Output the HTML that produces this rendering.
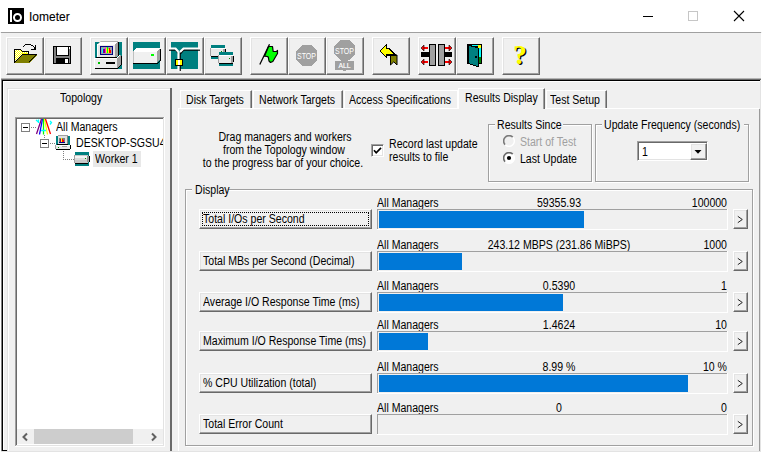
<!DOCTYPE html>
<html><head><meta charset="utf-8">
<style>
html,body{margin:0;padding:0;}
body{width:762px;height:452px;overflow:hidden;background:#f0f0f0;position:relative;}
.a{position:absolute;}
.t{position:absolute;font-family:"Liberation Sans",sans-serif;font-size:12px;line-height:14px;white-space:nowrap;color:#000;transform:scaleX(0.88);transform-origin:0 0;}
.tc{text-align:center;transform-origin:50% 0;}
.tr{text-align:right;transform-origin:100% 0;}
.btn{position:absolute;box-sizing:border-box;border-top:1px solid #fff;border-left:1px solid #fff;border-right:1px solid #696969;border-bottom:1px solid #696969;box-shadow:inset -1px -1px 0 #a0a0a0, inset 1px 1px 0 #e3e3e3;}
.sunk{position:absolute;box-sizing:border-box;border-top:1px solid #a0a0a0;border-left:1px solid #a0a0a0;border-right:1px solid #fff;border-bottom:1px solid #fff;box-shadow:inset 1px 1px 0 #696969, inset -1px -1px 0 #e3e3e3;}
.grp{position:absolute;box-sizing:border-box;border:1px solid #a0a0a0;box-shadow:1px 1px 0 #fff, inset 1px 1px 0 #fff;}
svg{position:absolute;left:0;top:0;}
</style></head><body>

<div class="a" style="left:0px;top:0px;width:762px;height:32px;background:#fff;"></div>
<div class="a" style="left:1px;top:32px;width:760px;height:1px;background:#a0a0a0;"></div>
<div class="a" style="left:0px;top:33px;width:1px;height:419px;background:#fff;"></div>
<div class="a" style="left:761px;top:33px;width:1px;height:419px;background:#fff;"></div>
<div class="a" style="left:8px;top:8px;width:16px;height:16px;background:#000;"></div>
<div class="a" style="left:10px;top:10px;width:2px;height:12px;background:#fff;"></div>
<div class="a" style="left:13px;top:13px;width:9px;height:9px;box-sizing:border-box;border:2px solid #fff;border-radius:50%;"></div>
<div class="a" style="left:29px;top:10px;font-family:'Liberation Sans',sans-serif;font-size:12px;line-height:14px;white-space:nowrap;color:#000;-webkit-text-stroke:0.1px #000">Iometer</div>
<div class="a" style="left:643px;top:16px;width:10px;height:1px;background:#000;"></div>
<div class="a" style="left:688px;top:11px;width:8px;height:8px;border:1px solid #c6c6c6;"></div>
<svg style="left:733px;top:10px" width="12" height="12"><path d="M1 1L11 11M11 1L1 11" stroke="#000" stroke-width="1.1"/></svg>
<div class="btn" style="left:6px;top:37px;width:38px;height:38px;background:#f0f0f0"></div>
<div class="btn" style="left:44px;top:37px;width:38px;height:38px;background:#f0f0f0"></div>
<div class="btn" style="left:90px;top:37px;width:38px;height:38px;background:#f0f0f0"></div>
<div class="btn" style="left:128px;top:37px;width:38px;height:38px;background:#f0f0f0"></div>
<div class="btn" style="left:166px;top:37px;width:38px;height:38px;background:#f0f0f0"></div>
<div class="btn" style="left:204px;top:37px;width:38px;height:38px;background:#f0f0f0"></div>
<div class="btn" style="left:250px;top:37px;width:38px;height:38px;background:#f0f0f0"></div>
<div class="btn" style="left:288px;top:37px;width:38px;height:38px;background:#f0f0f0"></div>
<div class="btn" style="left:326px;top:37px;width:38px;height:38px;background:#f0f0f0"></div>
<div class="btn" style="left:372px;top:37px;width:38px;height:38px;background:#f0f0f0"></div>
<div class="btn" style="left:418px;top:37px;width:38px;height:38px;background:#f0f0f0"></div>
<div class="btn" style="left:456px;top:37px;width:38px;height:38px;background:#f0f0f0"></div>
<div class="btn" style="left:502px;top:37px;width:38px;height:38px;background:#f0f0f0"></div>
<svg width="762" height="80" shape-rendering="crispEdges"><path d="M14 49H21V50H22V51H29V54H22L15 62V49Z" fill="#ffff00"/><path d="M15 50h1v1h-1zM17 50h1v1h-1zM19 50h1v1h-1zM16 51h1v1h-1zM18 51h1v1h-1zM20 51h1v1h-1zM15 52h1v1h-1zM17 52h1v1h-1zM19 52h1v1h-1zM21 52h1v1h-1zM23 52h1v1h-1zM25 52h1v1h-1zM27 52h1v1h-1zM16 53h1v1h-1zM18 53h1v1h-1zM20 53h1v1h-1zM15 54h1v1h-1zM17 54h1v1h-1zM19 54h1v1h-1zM16 55h1v1h-1zM18 55h1v1h-1zM15 56h1v1h-1zM17 56h1v1h-1zM16 57h1v1h-1zM15 58h1v1h-1z" fill="#fff"/><rect x="14" y="49" width="7" height="1" fill="#000"/><rect x="21" y="50" width="1" height="1" fill="#000"/><rect x="22" y="51" width="7" height="1" fill="#000"/><rect x="28" y="51" width="1" height="3" fill="#000"/><rect x="14" y="49" width="1" height="14" fill="#000"/><rect x="14" y="62" width="16" height="1" fill="#000"/><path d="M22 54H37V55.5L30 62.5H15.5Z" fill="#808000"/><path d="M22.5 54.5H36.5L29 62M22.5 54.5L15 62" stroke="#000" stroke-width="1" fill="none"/><path d="M21.5 54.5L14.5 61.5" stroke="#fff" stroke-width="1" fill="none" opacity="0.8"/><rect x="23" y="46" width="1" height="1" fill="#000"/><rect x="24" y="45" width="1" height="1" fill="#000"/><rect x="25" y="44" width="6" height="1" fill="#000"/><rect x="31" y="45" width="2" height="1" fill="#000"/><rect x="33" y="46" width="1" height="1" fill="#000"/><rect x="34" y="47" width="1" height="2" fill="#000"/><rect x="35" y="45" width="1" height="5" fill="#000"/><rect x="31" y="49" width="5" height="1" fill="#000"/><rect x="53" y="46" width="18" height="18" fill="#000"/><rect x="54" y="47" width="16" height="16" fill="#808080"/><rect x="56" y="46" width="13" height="10" fill="#000"/><rect x="57" y="47" width="11" height="8" fill="#fff"/><rect x="69" y="47" width="1" height="2" fill="#fff"/><rect x="56" y="58" width="13" height="5" fill="#000"/><rect x="65" y="59" width="3" height="4" fill="#fff"/><rect x="95" y="42" width="27" height="27" fill="#008080"/><path d="M97 44L100 41H118L115 44Z" fill="#fff"/><path d="M97.5 44.5L100.5 41.5H118" stroke="#b0b0b0" stroke-width="1" fill="none" shape-rendering="auto"/><rect x="97" y="44" width="18" height="14" fill="#e8e8e8"/><rect x="97" y="44" width="18" height="1" fill="#fff"/><rect x="97" y="44" width="1" height="14" fill="#fff"/><path d="M115 44L118 41V55L115 58Z" fill="#a0a0a0"/><rect x="118" y="42" width="1" height="14" fill="#000"/><rect x="100" y="46" width="13" height="9" fill="#000080"/><rect x="101" y="47" width="11" height="7" fill="#a0a0a0"/><rect x="102" y="48" width="1" height="5" fill="#00ffff"/><rect x="103" y="49" width="2" height="4" fill="#800080"/><rect x="105" y="48" width="1" height="5" fill="#ff00ff"/><rect x="106" y="48" width="1" height="5" fill="#ffff00"/><rect x="107" y="47" width="1" height="6" fill="#00ff00"/><rect x="108" y="49" width="1" height="4" fill="#ffff00"/><rect x="109" y="48" width="1" height="5" fill="#ff0000"/><rect x="110" y="50" width="1" height="3" fill="#ff0000"/><rect x="96" y="57" width="23" height="1" fill="#000"/><rect x="94" y="58" width="23" height="10" fill="#ececec"/><rect x="94" y="58" width="23" height="1" fill="#fff"/><rect x="94" y="58" width="1" height="10" fill="#fff"/><path d="M117 58L121 55V64L117 68Z" fill="#a0a0a0"/><path d="M116 58L120 55H121L117 58Z" fill="#fff"/><rect x="121" y="56" width="1" height="9" fill="#000"/><rect x="95" y="68" width="23" height="1" fill="#000"/><path d="M117.5 68.5L121.5 64.5" stroke="#000" stroke-width="1.2"/><rect x="98" y="62" width="2" height="2" fill="#00c000"/><rect x="106" y="62" width="9" height="2" fill="#000"/><rect x="133" y="42" width="27" height="27" fill="#008080"/><path d="M136 48H160L157 51H133Z" fill="#fff"/><rect x="133" y="51" width="24" height="12" fill="#f0f0f0"/><rect x="133" y="51" width="24" height="1" fill="#fff"/><rect x="133" y="51" width="1" height="12" fill="#c0c0c0"/><path d="M157 51L160 48V59L157 62Z" fill="#a0a0a0"/><rect x="160" y="49" width="1" height="11" fill="#000"/><rect x="133" y="63" width="24" height="1" fill="#000"/><path d="M157 63L161 59V60L157.5 64Z" fill="#000"/><rect x="151" y="54" width="3" height="2" fill="#00ff00"/><rect x="171" y="42" width="27" height="27" fill="#008080"/><path d="M169 50H176L178.5 53.5M200 50H183.5L180.5 53.5M180 53V71" stroke="#000" stroke-width="1.6" fill="none" shape-rendering="auto"/><path d="M169 48.5H175.5L178.5 52M200 48.5H183.5L180 52M178.5 52V71" stroke="#fff" stroke-width="2.2" fill="none" shape-rendering="auto"/><rect x="175" y="59" width="8" height="7" fill="#000"/><rect x="176" y="60" width="6" height="5" fill="#ffff00"/><rect x="178" y="60" width="2" height="5" fill="#fff"/><rect x="211" y="45" width="14" height="14" fill="#008080"/><rect x="210" y="48" width="15" height="8" fill="#e8e8e8"/><rect x="210" y="48" width="15" height="1" fill="#fff"/><rect x="210" y="48" width="1" height="8" fill="#a0a0a0"/><rect x="223" y="49" width="2" height="7" fill="#a0a0a0"/><rect x="225" y="49" width="1" height="6" fill="#000"/><rect x="211" y="56" width="14" height="1" fill="#000"/><rect x="221" y="51" width="1" height="1" fill="#008000"/><rect x="219" y="52" width="14" height="14" fill="#008080"/><rect x="218" y="55" width="15" height="8" fill="#e8e8e8"/><rect x="218" y="55" width="15" height="1" fill="#fff"/><rect x="218" y="55" width="1" height="8" fill="#a0a0a0"/><rect x="231" y="56" width="2" height="7" fill="#a0a0a0"/><rect x="233" y="56" width="1" height="6" fill="#000"/><rect x="219" y="63" width="14" height="1" fill="#000"/><rect x="229" y="58" width="1" height="1" fill="#008000"/><path d="M264.5 56.2L268.5 46.5H272.5L273.2 51.5H276.5L277.5 50.5V53.5L272.8 61.5L270.5 62.5L269 61L268.3 57.2L267.5 56.5Z" fill="#00ff00" stroke="#000" stroke-width="1.2" stroke-linejoin="round" shape-rendering="auto"/><path d="M259.8 64.5L269.5 44.2" stroke="#000" stroke-width="1.25" shape-rendering="auto"/><path d="M302 45H311L317 51V60L311 66H302L296 60V51Z" fill="#a0a0a0"/><text x="306.5" y="58.8" font-family="Liberation Sans" font-size="9" fill="#fff" text-anchor="middle" textLength="19" shape-rendering="auto" lengthAdjust="spacingAndGlyphs">STOP</text><path d="M340 40H349L355 46V54L349 60H340L334 54V46Z" fill="#a0a0a0"/><rect x="341" y="59" width="7" height="2" fill="#a0a0a0"/><rect x="335" y="61" width="19" height="9" fill="#a0a0a0"/><rect x="343" y="70" width="3" height="1" fill="#a0a0a0"/><text x="344.5" y="54" font-family="Liberation Sans" font-size="9" fill="#fff" text-anchor="middle" textLength="19" shape-rendering="auto" lengthAdjust="spacingAndGlyphs">STOP</text><text x="344.5" y="68.2" font-family="Liberation Sans" font-size="8" fill="#fff" text-anchor="middle" textLength="12" shape-rendering="auto" stroke="#fff" stroke-width="0.2" lengthAdjust="spacingAndGlyphs">ALL</text><path d="M390.5 55H397V65L393.8 61.8L390.5 65Z" fill="#808000" stroke="#000" stroke-width="1" shape-rendering="auto"/><path d="M380 51L386.5 44.8V48.3H388.5L396 55H386.5V57.5Z" fill="#ffff00" stroke="#000" stroke-width="1.1" stroke-linejoin="miter"/><rect x="421" y="52" width="8" height="5" fill="#000"/><rect x="445" y="52" width="7" height="5" fill="#000"/><rect x="429" y="44" width="7" height="22" fill="#000"/><rect x="430" y="45" width="5" height="20" fill="#a0a0a0"/><rect x="438" y="44" width="7" height="22" fill="#000"/><rect x="439" y="45" width="5" height="20" fill="#a0a0a0"/><rect x="423" y="47" width="5" height="2" fill="#ff0000"/><rect x="445" y="47" width="5" height="2" fill="#ff0000"/><path d="M421 48L424 45V51Z" fill="#ff0000" stroke="#000" stroke-width="0.6" shape-rendering="auto"/><path d="M452 48L449 45V51Z" fill="#ff0000" stroke="#000" stroke-width="0.6" shape-rendering="auto"/><rect x="423" y="61" width="5" height="2" fill="#ff0000"/><rect x="445" y="61" width="5" height="2" fill="#ff0000"/><path d="M421 62L424 59V65Z" fill="#ff0000" stroke="#000" stroke-width="0.6" shape-rendering="auto"/><path d="M452 62L449 59V65Z" fill="#ff0000" stroke="#000" stroke-width="0.6" shape-rendering="auto"/><rect x="467" y="44" width="15" height="20" fill="#000"/><rect x="479" y="45" width="2" height="12" fill="#00ffff"/><rect x="472" y="45" width="7" height="1" fill="#00ffff"/><rect x="478" y="45" width="3" height="3" fill="#ffff00"/><rect x="479" y="57" width="2" height="6" fill="#008000"/><path d="M468 45L478 48V66.5L468 63.5Z" fill="#008080" stroke="#000" stroke-width="1"/><rect x="475" y="56" width="2" height="2" fill="#000"/><text x="521.3" y="65" font-family="Liberation Serif" font-size="27" font-weight="bold" fill="#000" text-anchor="middle" shape-rendering="auto">?</text><text x="520" y="64" font-family="Liberation Serif" font-size="27" font-weight="bold" fill="#ffff00" text-anchor="middle" shape-rendering="auto">?</text></svg>
<div class="a" style="left:1px;top:78px;width:760px;height:1px;background:#b4b4b4;"></div>
<div class="a" style="left:1px;top:79px;width:760px;height:1px;background:#696969;"></div>
<div class="a" style="left:1px;top:79px;width:1px;height:372px;background:#808080;"></div>
<div class="a" style="left:2px;top:80px;width:758px;height:1px;background:#000;"></div>
<div class="a" style="left:2px;top:80px;width:1px;height:371px;background:#000;"></div>
<div class="a" style="left:2px;top:450px;width:6px;height:1px;background:#000;"></div>
<div class="a" style="left:3px;top:81px;width:757px;height:1px;background:#fff;"></div>
<div class="a" style="left:3px;top:81px;width:1px;height:369px;background:#fff;"></div>
<div class="a" style="left:760px;top:80px;width:1px;height:372px;background:#e3e3e3;"></div>
<div class="a" style="left:1px;top:451px;width:760px;height:1px;background:#e3e3e3;"></div>
<div class="a" style="left:7px;top:88px;width:1px;height:363px;background:#e3e3e3;"></div>
<div class="a" style="left:7px;top:88px;width:164px;height:1px;background:#e3e3e3;"></div>
<div class="a" style="left:8px;top:89px;width:1px;height:362px;background:#fff;"></div>
<div class="a" style="left:8px;top:89px;width:162px;height:1px;background:#fff;"></div>
<div class="a" style="left:170px;top:88px;width:2px;height:363px;background:#696969;"></div>
<div class="t" style="left:60px;top:91px;color:#000;">Topology</div>
<div class="a" style="left:15px;top:117px;width:150px;height:330px;background:#fff;"></div>
<div class="a" style="left:15px;top:117px;width:149px;height:1px;background:#a0a0a0;"></div>
<div class="a" style="left:15px;top:117px;width:1px;height:330px;background:#a0a0a0;"></div>
<div class="a" style="left:16px;top:118px;width:147px;height:1px;background:#696969;"></div>
<div class="a" style="left:16px;top:118px;width:1px;height:328px;background:#696969;"></div>
<div class="a" style="left:163px;top:118px;width:1px;height:328px;background:#e3e3e3;"></div>
<div class="a" style="left:16px;top:445px;width:148px;height:1px;background:#e3e3e3;"></div>
<div class="a" style="left:164px;top:117px;width:1px;height:330px;background:#fff;"></div>
<div class="a" style="left:15px;top:446px;width:150px;height:1px;background:#fff;"></div>
<div class="a" style="left:17px;top:429px;width:146px;height:15px;background:#f0f0f0;"></div>
<div class="a" style="left:34px;top:429px;width:99px;height:15px;background:#cdcdcd;"></div>
<svg style="left:16px;top:429px" width="17" height="16"><path d="M11 4.5L7.5 8L11 11.5" stroke="#606060" stroke-width="2" fill="none"/></svg>
<svg style="left:146px;top:429px" width="17" height="16"><path d="M6 4.5L9.5 8L6 11.5" stroke="#606060" stroke-width="2" fill="none"/></svg>
<svg width="200" height="180" shape-rendering="crispEdges"><rect x="21" y="123" width="9" height="9" fill="#808080"/><rect x="22" y="124" width="7" height="7" fill="#fff"/><rect x="23" y="127" width="5" height="1" fill="#000"/><rect x="40" y="139" width="9" height="9" fill="#808080"/><rect x="41" y="140" width="7" height="7" fill="#fff"/><rect x="42" y="143" width="5" height="1" fill="#000"/><rect x="31" y="127" width="1" height="1" fill="#808080"/><rect x="33" y="127" width="1" height="1" fill="#808080"/><rect x="35" y="127" width="1" height="1" fill="#808080"/><rect x="44" y="135" width="1" height="1" fill="#808080"/><rect x="44" y="137" width="1" height="1" fill="#808080"/><rect x="50" y="143" width="1" height="1" fill="#808080"/><rect x="52" y="143" width="1" height="1" fill="#808080"/><rect x="54" y="143" width="1" height="1" fill="#808080"/><rect x="63" y="151" width="1" height="1" fill="#808080"/><rect x="63" y="153" width="1" height="1" fill="#808080"/><rect x="63" y="155" width="1" height="1" fill="#808080"/><rect x="63" y="157" width="1" height="1" fill="#808080"/><rect x="63" y="159" width="1" height="1" fill="#808080"/><rect x="63" y="159" width="1" height="1" fill="#808080"/><rect x="65" y="159" width="1" height="1" fill="#808080"/><rect x="67" y="159" width="1" height="1" fill="#808080"/><rect x="69" y="159" width="1" height="1" fill="#808080"/><rect x="71" y="159" width="1" height="1" fill="#808080"/><rect x="73" y="159" width="1" height="1" fill="#808080"/><g shape-rendering="auto" stroke-width="1.3" fill="none"><path d="M41.5 119L36.5 134" stroke="#800080"/><path d="M42.5 119L39.5 134.5" stroke="#0000ff"/><path d="M43.5 119V134.5" stroke="#00ff00"/><path d="M44.5 119L47.5 134.5" stroke="#ffff00"/><path d="M45.5 119L50.5 134" stroke="#ff0000"/><path d="M36 120L39 122.5M38.5 119.5V123M50 121L51.5 122.5L50 124.5M41 130.5H46" stroke="#00ffff"/></g><rect x="56" y="136" width="14" height="14" fill="#008080"/><rect x="58" y="135" width="10" height="9" fill="#e0e0e0"/><rect x="58" y="135" width="10" height="1" fill="#a0a0a0"/><rect x="67" y="136" width="1" height="8" fill="#808080"/><rect x="59" y="138" width="6" height="5" fill="#808080"/><rect x="60" y="139" width="1" height="3" fill="#800080"/><rect x="61" y="138" width="1" height="4" fill="#ffff00"/><rect x="62" y="139" width="1" height="3" fill="#ff0000"/><rect x="63" y="140" width="1" height="2" fill="#ff0000"/><rect x="59" y="142" width="6" height="1" fill="#000080"/><rect x="57" y="144" width="11" height="1" fill="#000"/><rect x="55" y="145" width="15" height="4" fill="#e8e8e8"/><rect x="55" y="145" width="15" height="1" fill="#fff"/><rect x="55" y="145" width="1" height="4" fill="#a0a0a0"/><rect x="70" y="145" width="1" height="4" fill="#000"/><rect x="56" y="149" width="14" height="1" fill="#000"/><rect x="58" y="147" width="1" height="1" fill="#00a000"/><rect x="62" y="146" width="5" height="1" fill="#a0a0a0"/><rect x="75" y="152" width="14" height="14" fill="#008080"/><rect x="74" y="155" width="14" height="8" fill="#c8c8c8"/><rect x="74" y="156" width="14" height="2" fill="#f4f4f4"/><rect x="74" y="158" width="14" height="2" fill="#dcdcdc"/><rect x="74" y="155" width="1" height="8" fill="#a0a0a0"/><rect x="87" y="156" width="1" height="6" fill="#909090"/><rect x="89" y="156" width="1" height="6" fill="#000"/><rect x="88" y="156" width="1" height="6" fill="#a0a0a0"/><rect x="75" y="163" width="13" height="1" fill="#000"/><rect x="85" y="158" width="1" height="1" fill="#00a000"/></svg>
<div class="t" style="left:56px;top:120px;color:#000;">All Managers</div>
<div class="t" style="left:76px;top:136px;color:#000;">DESKTOP-SGSU4</div>
<div class="a" style="left:93px;top:151px;width:48px;height:16px;background:#e8e8e8;"></div>
<div class="t" style="left:95px;top:152px;color:#000;">Worker 1</div>
<div class="a" style="left:163px;top:118px;width:1px;height:30px;background:#e3e3e3;"></div>
<div class="a" style="left:164px;top:117px;width:1px;height:30px;background:#fff;"></div>
<div class="a" style="left:165px;top:117px;width:5px;height:30px;background:#f0f0f0;"></div>
<div class="a" style="left:178px;top:108px;width:581px;height:1px;background:#fff;"></div>
<div class="a" style="left:178px;top:108px;width:1px;height:343px;background:#fff;"></div>
<div class="a" style="left:759px;top:109px;width:1px;height:342px;background:#9a9a9a;"></div>
<div class="a" style="left:180px;top:90px;width:72px;height:18px;box-sizing:border-box;background:#f0f0f0;border-top:1px solid #fff;border-left:1px solid #fff;border-right:1px solid #696969;box-shadow:inset -1px 0 0 #a0a0a0;"></div>
<div class="t" style="left:186px;top:93px;color:#000;">Disk Targets</div>
<div class="a" style="left:253px;top:90px;width:90px;height:18px;box-sizing:border-box;background:#f0f0f0;border-top:1px solid #fff;border-left:1px solid #fff;border-right:1px solid #696969;box-shadow:inset -1px 0 0 #a0a0a0;"></div>
<div class="t" style="left:259px;top:93px;color:#000;">Network Targets</div>
<div class="a" style="left:344px;top:90px;width:114px;height:18px;box-sizing:border-box;background:#f0f0f0;border-top:1px solid #fff;border-left:1px solid #fff;border-right:1px solid #696969;box-shadow:inset -1px 0 0 #a0a0a0;"></div>
<div class="t" style="left:349px;top:93px;color:#000;">Access Specifications</div>
<div class="a" style="left:546px;top:90px;width:61px;height:18px;box-sizing:border-box;background:#f0f0f0;border-top:1px solid #fff;border-left:1px solid #fff;border-right:1px solid #696969;box-shadow:inset -1px 0 0 #a0a0a0;"></div>
<div class="t" style="left:550px;top:93px;color:#000;">Test Setup</div>
<div class="a" style="left:456px;top:91px;width:1px;height:17px;background:#f0f0f0;"></div>
<div class="a" style="left:457px;top:90px;width:1px;height:18px;background:#fff;"></div>
<div class="a" style="left:458px;top:88px;width:87px;height:21px;box-sizing:border-box;background:#f0f0f0;border-top:1px solid #fff;border-left:1px solid #fff;border-right:1px solid #696969;box-shadow:inset -1px 0 0 #a0a0a0;"></div>
<div class="t" style="left:465px;top:91px;color:#000;">Results Display</div>
<div class="t tc" style="left:185.0px;width:200px;top:130px;color:#000;">Drag managers and workers</div>
<div class="t tc" style="left:184.0px;width:200px;top:143px;color:#000;">from the Topology window</div>
<div class="t tc" style="left:172.5px;width:220px;top:156px;color:#000;">to the progress bar of your choice.</div>
<div class="sunk" style="left:371px;top:144px;width:13px;height:13px;background:#fff"></div>
<svg style="left:371px;top:144px" width="13" height="13"><path d="M3 6.2L5.2 8.8L10 3.8" stroke="#000" stroke-width="1.7" fill="none"/></svg>
<div class="t" style="left:389px;top:137px;color:#000;">Record last update</div>
<div class="t" style="left:389px;top:150px;color:#000;">results to file</div>
<div class="grp" style="left:488px;top:124px;width:104px;height:58px;"></div>
<div class="a" style="left:495px;top:120px;width:68px;height:10px;background:#f0f0f0;"></div>
<div class="t" style="left:497px;top:118px;color:#000;">Results Since</div>
<svg style="left:503px;top:135px" width="12" height="12"><circle cx="6" cy="6" r="5" fill="#f0f0f0"/><path d="M2.2 9.8A5.2 5.2 0 0 1 9.8 2.2" stroke="#7a7a7a" stroke-width="1.6" fill="none"/><path d="M9.8 2.2A5.2 5.2 0 0 1 2.2 9.8" stroke="#fff" stroke-width="1.4" fill="none"/></svg>
<div class="t" style="left:520px;top:135px;color:#a0a0a0;">Start of Test</div>
<svg style="left:503px;top:152px" width="12" height="12"><circle cx="6" cy="6" r="5" fill="#fff"/><path d="M2.2 9.8A5.2 5.2 0 0 1 9.8 2.2" stroke="#6a6a6a" stroke-width="1.6" fill="none"/><path d="M9.8 2.2A5.2 5.2 0 0 1 2.2 9.8" stroke="#fff" stroke-width="1.4" fill="none"/><circle cx="6" cy="6" r="2.1" fill="#000"/></svg>
<div class="t" style="left:520px;top:152px;color:#000;">Last Update</div>
<div class="grp" style="left:595px;top:124px;width:154px;height:58px;"></div>
<div class="a" style="left:602px;top:120px;width:142px;height:10px;background:#f0f0f0;"></div>
<div class="t" style="left:604px;top:118px;color:#000;">Update Frequency (seconds)</div>
<div class="sunk" style="left:637px;top:141px;width:71px;height:20px;background:#fff"></div>
<div class="btn" style="left:690px;top:143px;width:17px;height:17px;background:#f0f0f0"></div>
<svg style="left:690px;top:143px" width="17" height="17"><path d="M4.5 7H11.5L8 10.8Z" fill="#000"/></svg>
<div class="t" style="left:642px;top:145px;color:#000;">1</div>
<div class="grp" style="left:185px;top:189px;width:568px;height:257px;"></div>
<div class="a" style="left:192px;top:184px;width:36px;height:10px;background:#f0f0f0;"></div>
<div class="t" style="left:195px;top:183px;color:#000;">Display</div>
<div class="btn" style="left:199px;top:209px;width:173px;height:20px;background:#f0f0f0"></div>
<div class="a" style="left:202px;top:212px;width:167px;height:14px;box-sizing:border-box;border:1px dotted #000;"></div>
<div class="t" style="left:203px;top:212px;color:#000;">Total I/Os per Second</div>
<div class="t" style="left:377px;top:196px;color:#000;">All Managers</div>
<div class="t tc" style="left:438.5px;width:240px;top:196px;color:#000;">59355.93</div>
<div class="t tr" style="left:647px;width:80px;top:196px;color:#000;">100000</div>
<div class="a" style="left:377px;top:209px;width:351px;height:1px;background:#a0a0a0;"></div>
<div class="a" style="left:377px;top:209px;width:1px;height:21px;background:#a0a0a0;"></div>
<div class="a" style="left:377px;top:229px;width:351px;height:1px;background:#fff;"></div>
<div class="a" style="left:727px;top:209px;width:1px;height:21px;background:#fff;"></div>
<div class="a" style="left:379px;top:211px;width:205px;height:17px;background:#0078d7;"></div>
<div class="btn" style="left:733px;top:209px;width:15px;height:20px;background:#f0f0f0"></div>
<svg style="left:733px;top:209px" width="15" height="20"><path d="M4.8 7.3L9.3 10.5L4.8 13.7" stroke="#1a1a1a" stroke-width="0.95" fill="none"/></svg>
<div class="btn" style="left:199px;top:251px;width:173px;height:20px;background:#f0f0f0"></div>
<div class="t" style="left:203px;top:254px;color:#000;">Total MBs per Second (Decimal)</div>
<div class="t" style="left:377px;top:238px;color:#000;">All Managers</div>
<div class="t tc" style="left:438.5px;width:240px;top:238px;color:#000;">243.12 MBPS (231.86 MiBPS)</div>
<div class="t tr" style="left:647px;width:80px;top:238px;color:#000;">1000</div>
<div class="a" style="left:377px;top:251px;width:351px;height:1px;background:#a0a0a0;"></div>
<div class="a" style="left:377px;top:251px;width:1px;height:21px;background:#a0a0a0;"></div>
<div class="a" style="left:377px;top:271px;width:351px;height:1px;background:#fff;"></div>
<div class="a" style="left:727px;top:251px;width:1px;height:21px;background:#fff;"></div>
<div class="a" style="left:379px;top:253px;width:83px;height:17px;background:#0078d7;"></div>
<div class="btn" style="left:733px;top:251px;width:15px;height:20px;background:#f0f0f0"></div>
<svg style="left:733px;top:251px" width="15" height="20"><path d="M4.8 7.3L9.3 10.5L4.8 13.7" stroke="#1a1a1a" stroke-width="0.95" fill="none"/></svg>
<div class="btn" style="left:199px;top:292px;width:173px;height:20px;background:#f0f0f0"></div>
<div class="t" style="left:203px;top:295px;color:#000;">Average I/O Response Time (ms)</div>
<div class="t" style="left:377px;top:279px;color:#000;">All Managers</div>
<div class="t tc" style="left:438.5px;width:240px;top:279px;color:#000;">0.5390</div>
<div class="t tr" style="left:647px;width:80px;top:279px;color:#000;">1</div>
<div class="a" style="left:377px;top:292px;width:351px;height:1px;background:#a0a0a0;"></div>
<div class="a" style="left:377px;top:292px;width:1px;height:21px;background:#a0a0a0;"></div>
<div class="a" style="left:377px;top:312px;width:351px;height:1px;background:#fff;"></div>
<div class="a" style="left:727px;top:292px;width:1px;height:21px;background:#fff;"></div>
<div class="a" style="left:379px;top:294px;width:184px;height:17px;background:#0078d7;"></div>
<div class="btn" style="left:733px;top:292px;width:15px;height:20px;background:#f0f0f0"></div>
<svg style="left:733px;top:292px" width="15" height="20"><path d="M4.8 7.3L9.3 10.5L4.8 13.7" stroke="#1a1a1a" stroke-width="0.95" fill="none"/></svg>
<div class="btn" style="left:199px;top:331px;width:173px;height:20px;background:#f0f0f0"></div>
<div class="t" style="left:203px;top:334px;color:#000;">Maximum I/O Response Time (ms)</div>
<div class="t" style="left:377px;top:318px;color:#000;">All Managers</div>
<div class="t tc" style="left:438.5px;width:240px;top:318px;color:#000;">1.4624</div>
<div class="t tr" style="left:647px;width:80px;top:318px;color:#000;">10</div>
<div class="a" style="left:377px;top:331px;width:351px;height:1px;background:#a0a0a0;"></div>
<div class="a" style="left:377px;top:331px;width:1px;height:21px;background:#a0a0a0;"></div>
<div class="a" style="left:377px;top:351px;width:351px;height:1px;background:#fff;"></div>
<div class="a" style="left:727px;top:331px;width:1px;height:21px;background:#fff;"></div>
<div class="a" style="left:379px;top:333px;width:49px;height:17px;background:#0078d7;"></div>
<div class="btn" style="left:733px;top:331px;width:15px;height:20px;background:#f0f0f0"></div>
<svg style="left:733px;top:331px" width="15" height="20"><path d="M4.8 7.3L9.3 10.5L4.8 13.7" stroke="#1a1a1a" stroke-width="0.95" fill="none"/></svg>
<div class="btn" style="left:199px;top:373px;width:173px;height:20px;background:#f0f0f0"></div>
<div class="t" style="left:203px;top:376px;color:#000;">% CPU Utilization (total)</div>
<div class="t" style="left:377px;top:360px;color:#000;">All Managers</div>
<div class="t tc" style="left:438.5px;width:240px;top:360px;color:#000;">8.99 %</div>
<div class="t tr" style="left:647px;width:80px;top:360px;color:#000;">10 %</div>
<div class="a" style="left:377px;top:373px;width:351px;height:1px;background:#a0a0a0;"></div>
<div class="a" style="left:377px;top:373px;width:1px;height:21px;background:#a0a0a0;"></div>
<div class="a" style="left:377px;top:393px;width:351px;height:1px;background:#fff;"></div>
<div class="a" style="left:727px;top:373px;width:1px;height:21px;background:#fff;"></div>
<div class="a" style="left:379px;top:375px;width:309px;height:17px;background:#0078d7;"></div>
<div class="btn" style="left:733px;top:373px;width:15px;height:20px;background:#f0f0f0"></div>
<svg style="left:733px;top:373px" width="15" height="20"><path d="M4.8 7.3L9.3 10.5L4.8 13.7" stroke="#1a1a1a" stroke-width="0.95" fill="none"/></svg>
<div class="btn" style="left:199px;top:414px;width:173px;height:20px;background:#f0f0f0"></div>
<div class="t" style="left:203px;top:417px;color:#000;">Total Error Count</div>
<div class="t" style="left:377px;top:401px;color:#000;">All Managers</div>
<div class="t tc" style="left:438.5px;width:240px;top:401px;color:#000;">0</div>
<div class="t tr" style="left:647px;width:80px;top:401px;color:#000;">0</div>
<div class="a" style="left:377px;top:414px;width:351px;height:1px;background:#a0a0a0;"></div>
<div class="a" style="left:377px;top:414px;width:1px;height:21px;background:#a0a0a0;"></div>
<div class="a" style="left:377px;top:434px;width:351px;height:1px;background:#fff;"></div>
<div class="a" style="left:727px;top:414px;width:1px;height:21px;background:#fff;"></div>
<div class="btn" style="left:733px;top:414px;width:15px;height:20px;background:#f0f0f0"></div>
<svg style="left:733px;top:414px" width="15" height="20"><path d="M4.8 7.3L9.3 10.5L4.8 13.7" stroke="#1a1a1a" stroke-width="0.95" fill="none"/></svg>
</body></html>
